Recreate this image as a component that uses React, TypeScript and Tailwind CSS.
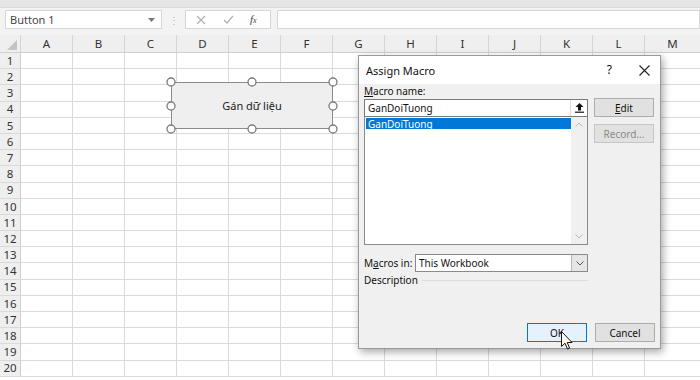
import React from "react";

const cols = ["A", "B", "C", "D", "E", "F", "G", "H", "I", "J", "K", "L", "M"];
const rows = Array.from({ length: 20 }, (_, i) => i + 1);

function Handle({ x, y }: { x: number; y: number }) {
  return <circle cx={x} cy={y} r={4} fill="#fff" stroke="#7a7a7a" strokeWidth={1.3} />;
}

export default function App() {
  return (
    <div className="relative w-[700px] h-[380px] overflow-hidden bg-white font-['Segoe_UI','Noto_Sans',sans-serif] text-[#222]">
      {/* top band */}
      <div className="h-[8px] bg-[#e6e6e6] border-b border-[#d9d9d9]" />
      {/* formula bar */}
      <div className="h-[27px] bg-[#f3f3f3] flex items-start pt-[2px]">
        <div className="ml-[5px] w-[157px] h-[19px] bg-white border border-[#d6d6d6] flex items-center justify-between pl-[4px] pr-[6px]">
          <span className="text-[11px] text-[#444] leading-none">Button 1</span>
          <svg width="7" height="4" viewBox="0 0 7 4"><path d="M0 0h7L3.5 4z" fill="#777" /></svg>
        </div>
        <div className="w-[23px] h-[19px] flex items-center justify-center text-[#b5b5b5] text-[10px] leading-none">⋮</div>
        <div className="w-[86px] h-[19px] bg-white border border-[#d6d6d6] flex items-center">
          <svg className="ml-[10px]" width="10" height="10" viewBox="0 0 10 10"><path d="M1 1l8 8M9 1l-8 8" stroke="#b0b0b0" strokeWidth="1.1" /></svg>
          <svg className="ml-[17px]" width="11" height="9" viewBox="0 0 11 9"><path d="M1 5l3 3 6-7" stroke="#b0b0b0" strokeWidth="1.2" fill="none" /></svg>
          <span className="ml-[16px] text-[11px] italic font-['Liberation_Serif',serif] text-[#444] leading-none">f<span className="text-[8px]">x</span></span>
        </div>
        <div className="ml-[6px] flex-1 h-[19px] bg-white border border-[#d6d6d6]" />
      </div>
      {/* column headers */}
      <div className="flex h-[18px] bg-[#efefef] border-b border-[#cfcfcf]">
        <div className="relative w-[21px] shrink-0 border-r border-[#d4d4d4]">
          <svg className="absolute right-[3px] bottom-[2px]" width="10" height="10" viewBox="0 0 10 10"><path d="M10 0V10H0z" fill="#c4c4c4" /></svg>
        </div>
        {cols.map((c, i) => (
          <div
            key={c}
            className={`${i === cols.length - 1 ? "flex-1" : "w-[52px] shrink-0 border-r border-[#d4d4d4]"} flex items-center justify-center text-[11.5px] text-[#333] leading-none`}
          >
            {c}
          </div>
        ))}
      </div>
      {/* rows */}
      {rows.map((r) => (
        <div key={r} className="flex h-[16.2px] border-b border-[#dadada]">
          <div className="w-[21px] shrink-0 bg-[#efefef] border-r border-[#cfcfcf] flex items-center justify-center text-[11.5px] text-[#333] leading-none">
            {r}
          </div>
          {cols.map((c, i) => (
            <div key={c} className={i === cols.length - 1 ? "flex-1" : "w-[52px] shrink-0 border-r border-[#dadada]"} />
          ))}
        </div>
      ))}

      {/* shape button */}
      <div className="absolute left-[171px] top-[82px] w-[162px] h-[47px] bg-[#efefef] border-[1.5px] border-[#8a8a8a] flex items-center justify-center">
        <span className="text-[11px] text-[#222] leading-none">Gán dữ liệu</span>
      </div>
      <svg className="absolute left-[160px] top-[72px]" width="185" height="68" viewBox="0 0 185 68">
        <Handle x={11} y={10} />
        <Handle x={92} y={10} />
        <Handle x={173} y={10} />
        <Handle x={11} y={34} />
        <Handle x={173} y={34} />
        <Handle x={11} y={57} />
        <Handle x={92} y={57} />
        <Handle x={173} y={57} />
      </svg>

      {/* dialog */}
      <div className="absolute left-[358px] top-[55px] w-[303px] h-[294px] bg-[#f0f0f0] border border-[#9a9a9a] shadow-[2px_3px_8px_rgba(0,0,0,0.35)] flex flex-col text-[10px]">
        <div className="h-[28px] bg-white flex items-center pl-[7px] pr-[10px]">
          <span className="text-[11px] text-[#111] leading-none">Assign Macro</span>
          <span className="ml-auto mr-[27px] text-[12px] text-[#111] leading-none">?</span>
          <svg width="11" height="11" viewBox="0 0 11 11"><path d="M0.5 0.5l10 10M10.5 0.5l-10 10" stroke="#222" strokeWidth="1.1" /></svg>
        </div>
        <div className="flex-1 flex flex-col px-[5px] pb-[6px]">
          <div className="flex">
            <div className="w-[224px] flex flex-col">
              <div className="h-[14px] leading-[14px] text-[#111] whitespace-nowrap">
                <span className="underline">M</span>acro name:
              </div>
              <div className="mt-[1px] h-[18px] bg-white border border-[#7a7a7a] flex items-center pl-[3px]">
                <span className="leading-none text-[#111]">GanDoiTuong</span>
                <div className="ml-auto w-[17px] h-full flex items-center justify-center border-l border-[#dcdcdc]">
                  <svg width="9" height="10" viewBox="0 0 9 10"><path d="M4.5 0L8.5 4H6V7.5H3V4H0.5z" fill="#111" /><path d="M0 9.2h9" stroke="#111" strokeWidth="1.2" /></svg>
                </div>
              </div>
              <div className="h-[128px] bg-white border border-[#8a8a8a] border-t-0 flex">
                <div className="flex-1 pt-[1px] pl-[1px]">
                  <div className="h-[11px] bg-[#0078d7] flex items-center pl-[2px]">
                    <span className="leading-none text-white">GanDoiTuong</span>
                  </div>
                </div>
                <div className="w-[16px] bg-[#f0f0f0] flex flex-col items-center justify-between py-[5px]">
                  <svg width="8" height="5" viewBox="0 0 8 5"><path d="M0.5 4.5L4 1l3.5 3.5" stroke="#b8b8b8" fill="none" /></svg>
                  <svg width="8" height="5" viewBox="0 0 8 5"><path d="M0.5 0.5L4 4l3.5-3.5" stroke="#b8b8b8" fill="none" /></svg>
                </div>
              </div>
            </div>
            <div className="ml-[6px] mt-[14px] w-[60px] flex flex-col gap-[7px]">
              <div className="h-[19px] bg-[#e1e1e1] border border-[#adadad] flex items-center justify-center leading-none text-[#111]">
                <span><span className="underline">E</span>dit</span>
              </div>
              <div className="h-[19px] bg-[#e1e1e1] border border-[#c6c6c6] flex items-center justify-center leading-none text-[#8a8a8a]">
                Record...
              </div>
            </div>
          </div>
          <div className="mt-[9px] flex items-center w-[224px]">
            <span className="w-[51px] shrink-0 whitespace-nowrap leading-none text-[#111]">
              M<span className="underline">a</span>cros in:
            </span>
            <div className="flex-1 h-[18px] bg-white border border-[#8a8a8a] flex items-center pl-[3px]">
              <span className="leading-none text-[#111]">This Workbook</span>
              <div className="ml-auto w-[16px] h-full bg-[#e6e6e6] border-l border-[#b5b5b5] flex items-center justify-center">
                <svg width="8" height="5" viewBox="0 0 8 5"><path d="M0.5 0.5L4 4l3.5-3.5" stroke="#555" fill="none" /></svg>
              </div>
            </div>
          </div>
          <div className="mt-[1px] flex items-center w-[224px]">
            <span className="leading-[14px] text-[#111]">Description</span>
            <div className="ml-[4px] flex-1 h-px bg-[#dcdcdc]" />
          </div>
          <div className="mt-auto flex justify-end gap-[8px]">
            <div className="w-[60px] h-[19px] bg-[#e5f1fb] border border-[#0078d7] flex items-center justify-center leading-none text-[#111]">
              OK
            </div>
            <div className="w-[60px] h-[19px] bg-[#e1e1e1] border border-[#adadad] flex items-center justify-center leading-none text-[#111]">
              Cancel
            </div>
          </div>
        </div>
      </div>

      {/* mouse cursor */}
      <svg className="absolute left-[561px] top-[331px]" width="12" height="19" viewBox="0 0 12 19">
        <path d="M0.5 0.5V15.5L4 12.2L6.5 18L8.6 17.1L6.2 11.5H11z" fill="#fff" stroke="#111" strokeWidth="1" strokeLinejoin="round" />
      </svg>
    </div>
  );
}
